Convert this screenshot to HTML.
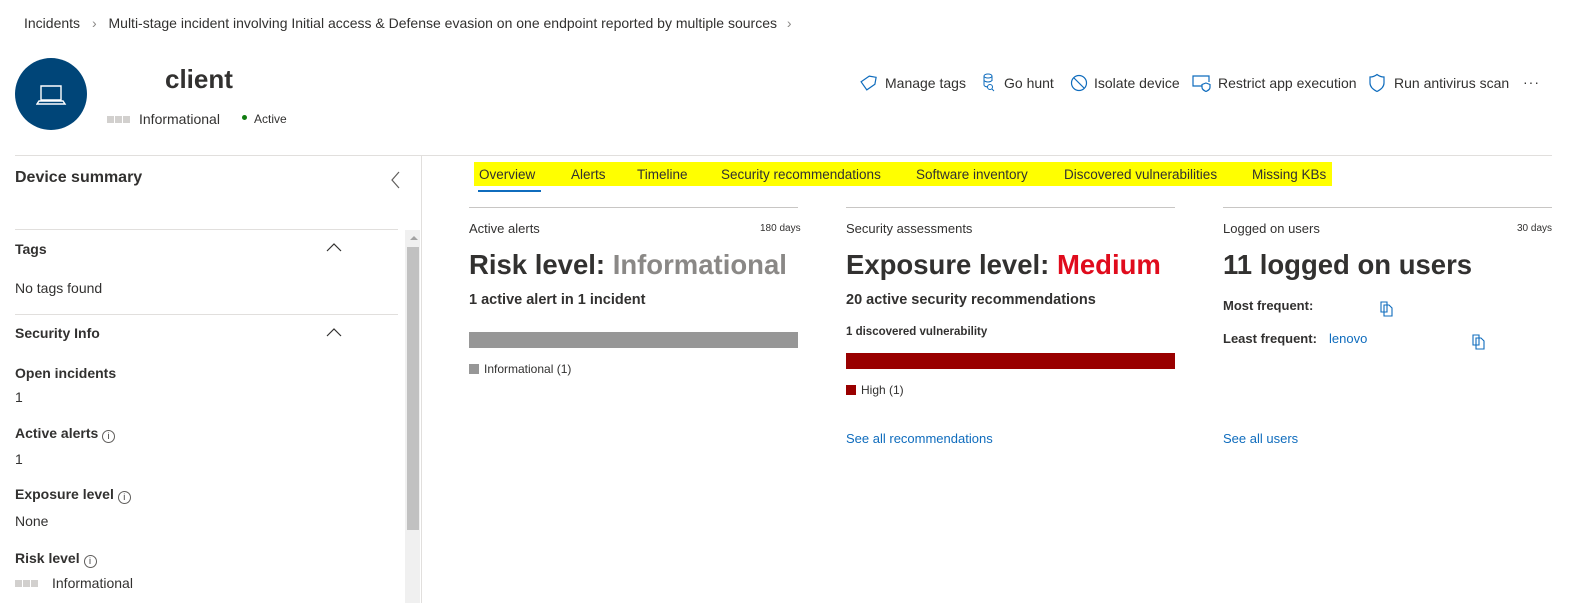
<!DOCTYPE html>
<html><head><meta charset="utf-8"><style>
*{margin:0;padding:0;box-sizing:border-box}
body{width:1574px;height:603px;overflow:hidden;background:#fff;font-family:"Liberation Sans",sans-serif;color:#323130;position:relative}
.a{position:absolute;white-space:nowrap}
.b{font-weight:bold}
.hl{position:absolute;height:1px;background:#e1dfdd}
.sq{display:inline-block;width:7px;height:7px;background:#d2d0ce;margin-right:1px;vertical-align:1px}
.lnk{color:#0f6cbd}
svg{position:absolute}
</style></head><body>
<div class="a" style="left:24px;top:15px;font-size:14px;color:#323130">Incidents <span style="color:#8a8886;margin:0 8px">&#x203A;</span> Multi-stage incident involving Initial access &amp; Defense evasion on one endpoint reported by multiple sources <span style="color:#8a8886;margin-left:6px">&#x203A;</span></div>

<div class="a" style="left:15px;top:58px;width:72px;height:72px;border-radius:50%;background:#004578"></div>
<svg style="left:36px;top:84px" width="32" height="24" viewBox="0 0 32 24"><path d="M5 2h20v14H5z M1 20h28l-2-3H3z" fill="none" stroke="#fff" stroke-width="1.4"/></svg>
<div class="a b" style="left:165px;top:64px;font-size:26px;color:#323130">client</div>
<div class="a" style="left:107px;top:111px;font-size:14px"><span class="sq"></span><span class="sq"></span><span class="sq"></span><span style="margin-left:8px">Informational</span></div>
<div class="a" style="left:242px;top:115px;width:5px;height:5px;border-radius:50%;background:#107c10"></div>
<div class="a" style="left:254px;top:112px;font-size:12px">Active</div>

<!-- actions -->
<svg style="left:859px;top:74px" width="18" height="18" viewBox="0 0 18 18"><path d="M9 2l7 0 0 7-7 7-7-7z" fill="none" stroke="#0f6cbd" stroke-width="1.2" transform="rotate(10 9 9)"/></svg>
<div class="a" style="left:885px;top:75px;font-size:14px">Manage tags</div>
<svg style="left:982px;top:73px" width="14" height="20" viewBox="0 0 14 20"><ellipse cx="6" cy="3" rx="4" ry="2" fill="none" stroke="#0f6cbd"/><path d="M2 3v9c0 1 2 2 4 2M10 3v5M2 7c0 1 2 2 4 2s4-1 4-2" fill="none" stroke="#0f6cbd"/><circle cx="8" cy="14" r="2.5" fill="none" stroke="#0f6cbd"/><path d="M10 16l2 2" stroke="#0f6cbd"/></svg>
<div class="a" style="left:1004px;top:75px;font-size:14px">Go hunt</div>
<svg style="left:1070px;top:74px" width="18" height="18" viewBox="0 0 18 18"><circle cx="9" cy="9" r="7.5" fill="none" stroke="#0f6cbd" stroke-width="1.2"/><path d="M4 4l10 10" stroke="#0f6cbd" stroke-width="1.2"/></svg>
<div class="a" style="left:1094px;top:75px;font-size:14px">Isolate device</div>
<svg style="left:1192px;top:74px" width="20" height="18" viewBox="0 0 20 18"><path d="M10 12H1V2h16v6" fill="none" stroke="#0f6cbd" stroke-width="1.2"/><path d="M14 9l4 1.5v3c0 2-2 3-4 4-2-1-4-2-4-4v-3z" fill="none" stroke="#0f6cbd" stroke-width="1.2"/></svg>
<div class="a" style="left:1218px;top:75px;font-size:14px">Restrict app execution</div>
<svg style="left:1368px;top:73px" width="18" height="20" viewBox="0 0 18 20"><path d="M9 1.5c2.5 2 5 2.5 7 2.5v6c0 4-3 6.5-7 8.5C5 16.5 2 14 2 10V4c2 0 4.5-.5 7-2.5z" fill="none" stroke="#0f6cbd" stroke-width="1.2"/></svg>
<div class="a" style="left:1394px;top:75px;font-size:14px">Run antivirus scan</div>
<div class="a" style="left:1523px;top:74px;font-size:14px;letter-spacing:1px">···</div>

<div class="hl" style="left:15px;top:155px;width:1537px"></div>
<div class="a" style="left:421px;top:155px;width:1px;height:448px;background:#e1dfdd"></div>

<!-- left panel -->
<div class="a b" style="left:15px;top:169px;font-size:16px">Device summary</div>
<svg style="left:390px;top:171px" width="12" height="18" viewBox="0 0 12 18"><path d="M9 1L2 9l7 8" fill="none" stroke="#605e5c" stroke-width="1.2"/></svg>
<div class="hl" style="left:15px;top:229px;width:383px"></div>
<div class="a b" style="left:15px;top:241px;font-size:14px">Tags</div>
<svg style="left:326px;top:243px" width="16" height="10" viewBox="0 0 16 10"><path d="M1 8l7-7 7 7" fill="none" stroke="#323130" stroke-width="1.2"/></svg>
<div class="a" style="left:15px;top:280px;font-size:14px">No tags found</div>
<div class="hl" style="left:15px;top:314px;width:383px"></div>
<div class="a b" style="left:15px;top:325px;font-size:14px">Security Info</div>
<svg style="left:326px;top:328px" width="16" height="10" viewBox="0 0 16 10"><path d="M1 8l7-7 7 7" fill="none" stroke="#323130" stroke-width="1.2"/></svg>
<div class="a b" style="left:15px;top:365px;font-size:14px">Open incidents</div>
<div class="a" style="left:15px;top:389px;font-size:14px">1</div>
<div class="a b" style="left:15px;top:425px;font-size:14px">Active alerts <span style="display:inline-block;width:13px;height:13px;border:1px solid #605e5c;border-radius:50%;font-size:9px;text-align:center;line-height:11px;font-weight:normal;vertical-align:-1px">i</span></div>
<div class="a" style="left:15px;top:451px;font-size:14px">1</div>
<div class="a b" style="left:15px;top:486px;font-size:14px">Exposure level <span style="display:inline-block;width:13px;height:13px;border:1px solid #605e5c;border-radius:50%;font-size:9px;text-align:center;line-height:11px;font-weight:normal;vertical-align:-1px">i</span></div>
<div class="a" style="left:15px;top:513px;font-size:14px">None</div>
<div class="a b" style="left:15px;top:550px;font-size:14px">Risk level <span style="display:inline-block;width:13px;height:13px;border:1px solid #605e5c;border-radius:50%;font-size:9px;text-align:center;line-height:11px;font-weight:normal;vertical-align:-1px">i</span></div>
<div class="a" style="left:15px;top:575px;font-size:14px"><span class="sq"></span><span class="sq"></span><span class="sq"></span><span style="margin-left:13px">Informational</span></div>
<div class="a" style="left:405px;top:230px;width:15px;height:373px;background:#f0f0f0"></div>
<div class="a" style="left:407px;top:247px;width:12px;height:283px;background:#c1c1c1"></div>
<div class="a" style="left:410px;top:236px;width:0;height:0;border-left:4px solid transparent;border-right:4px solid transparent;border-bottom:4px solid #a3a3a3"></div>

<!-- tabs -->
<div class="a" style="left:474px;top:162px;width:858px;height:24px;background:#ffff00"></div>
<div class="a" style="left:479px;top:167px;font-size:13.5px;color:#323130">Overview</div>
<div class="a" style="left:571px;top:167px;font-size:13.5px">Alerts</div>
<div class="a" style="left:637px;top:167px;font-size:13.5px">Timeline</div>
<div class="a" style="left:721px;top:167px;font-size:13.5px">Security recommendations</div>
<div class="a" style="left:916px;top:167px;font-size:13.5px">Software inventory</div>
<div class="a" style="left:1064px;top:167px;font-size:13.5px">Discovered vulnerabilities</div>
<div class="a" style="left:1252px;top:167px;font-size:13.5px">Missing KBs</div>
<div class="a" style="left:478px;top:190px;width:63px;height:2px;background:#0f6cbd"></div>

<!-- cards -->
<div class="hl" style="left:469px;top:207px;width:329px;background:#c8c6c4"></div>
<div class="hl" style="left:846px;top:207px;width:329px;background:#c8c6c4"></div>
<div class="hl" style="left:1223px;top:207px;width:329px;background:#c8c6c4"></div>

<div class="a" style="left:469px;top:221px;font-size:13px">Active alerts</div>
<div class="a" style="left:760px;top:223px;font-size:10px">180 days</div>
<div class="a b" style="left:469px;top:249px;font-size:27.5px">Risk level: <span style="color:#8a8886">Informational</span></div>
<div class="a b" style="left:469px;top:292px;font-size:14.5px">1 active alert in 1 incident</div>
<div class="a" style="left:469px;top:332px;width:329px;height:16px;background:#979797"></div>
<div class="a" style="left:469px;top:362px;font-size:12px"><span style="display:inline-block;width:10px;height:10px;background:#979797;margin-right:5px;vertical-align:-1px"></span>Informational (1)</div>

<div class="a" style="left:846px;top:221px;font-size:13px">Security assessments</div>
<div class="a b" style="left:846px;top:249px;font-size:27.5px">Exposure level: <span style="color:#e00b1c">Medium</span></div>
<div class="a b" style="left:846px;top:292px;font-size:14.5px">20 active security recommendations</div>
<div class="a b" style="left:846px;top:326px;font-size:11.5px">1 discovered vulnerability</div>
<div class="a" style="left:846px;top:353px;width:329px;height:16px;background:#990000"></div>
<div class="a" style="left:846px;top:383px;font-size:12px"><span style="display:inline-block;width:10px;height:10px;background:#990000;margin-right:5px;vertical-align:-1px"></span>High (1)</div>
<div class="a lnk" style="left:846px;top:431px;font-size:13px">See all recommendations</div>

<div class="a" style="left:1223px;top:221px;font-size:13px">Logged on users</div>
<div class="a" style="left:1517px;top:223px;font-size:10px">30 days</div>
<div class="a b" style="left:1223px;top:249px;font-size:27.5px">11 logged on users</div>
<div class="a b" style="left:1223px;top:298px;font-size:13px">Most frequent:</div>
<div class="a b" style="left:1223px;top:331px;font-size:13px">Least frequent:</div>
<div class="a lnk" style="left:1329px;top:331px;font-size:13px">lenovo</div>
<svg style="left:1380px;top:301px" width="14" height="16" viewBox="0 0 14 16"><path d="M1 1h6v10H1z M4 4h5l3 3v8H4z" fill="#fff" stroke="#0f6cbd" stroke-width="1.1"/></svg>
<svg style="left:1472px;top:334px" width="14" height="16" viewBox="0 0 14 16"><path d="M1 1h6v10H1z M4 4h5l3 3v8H4z" fill="#fff" stroke="#0f6cbd" stroke-width="1.1"/></svg>
<div class="a lnk" style="left:1223px;top:431px;font-size:13px">See all users</div>
</body></html>
